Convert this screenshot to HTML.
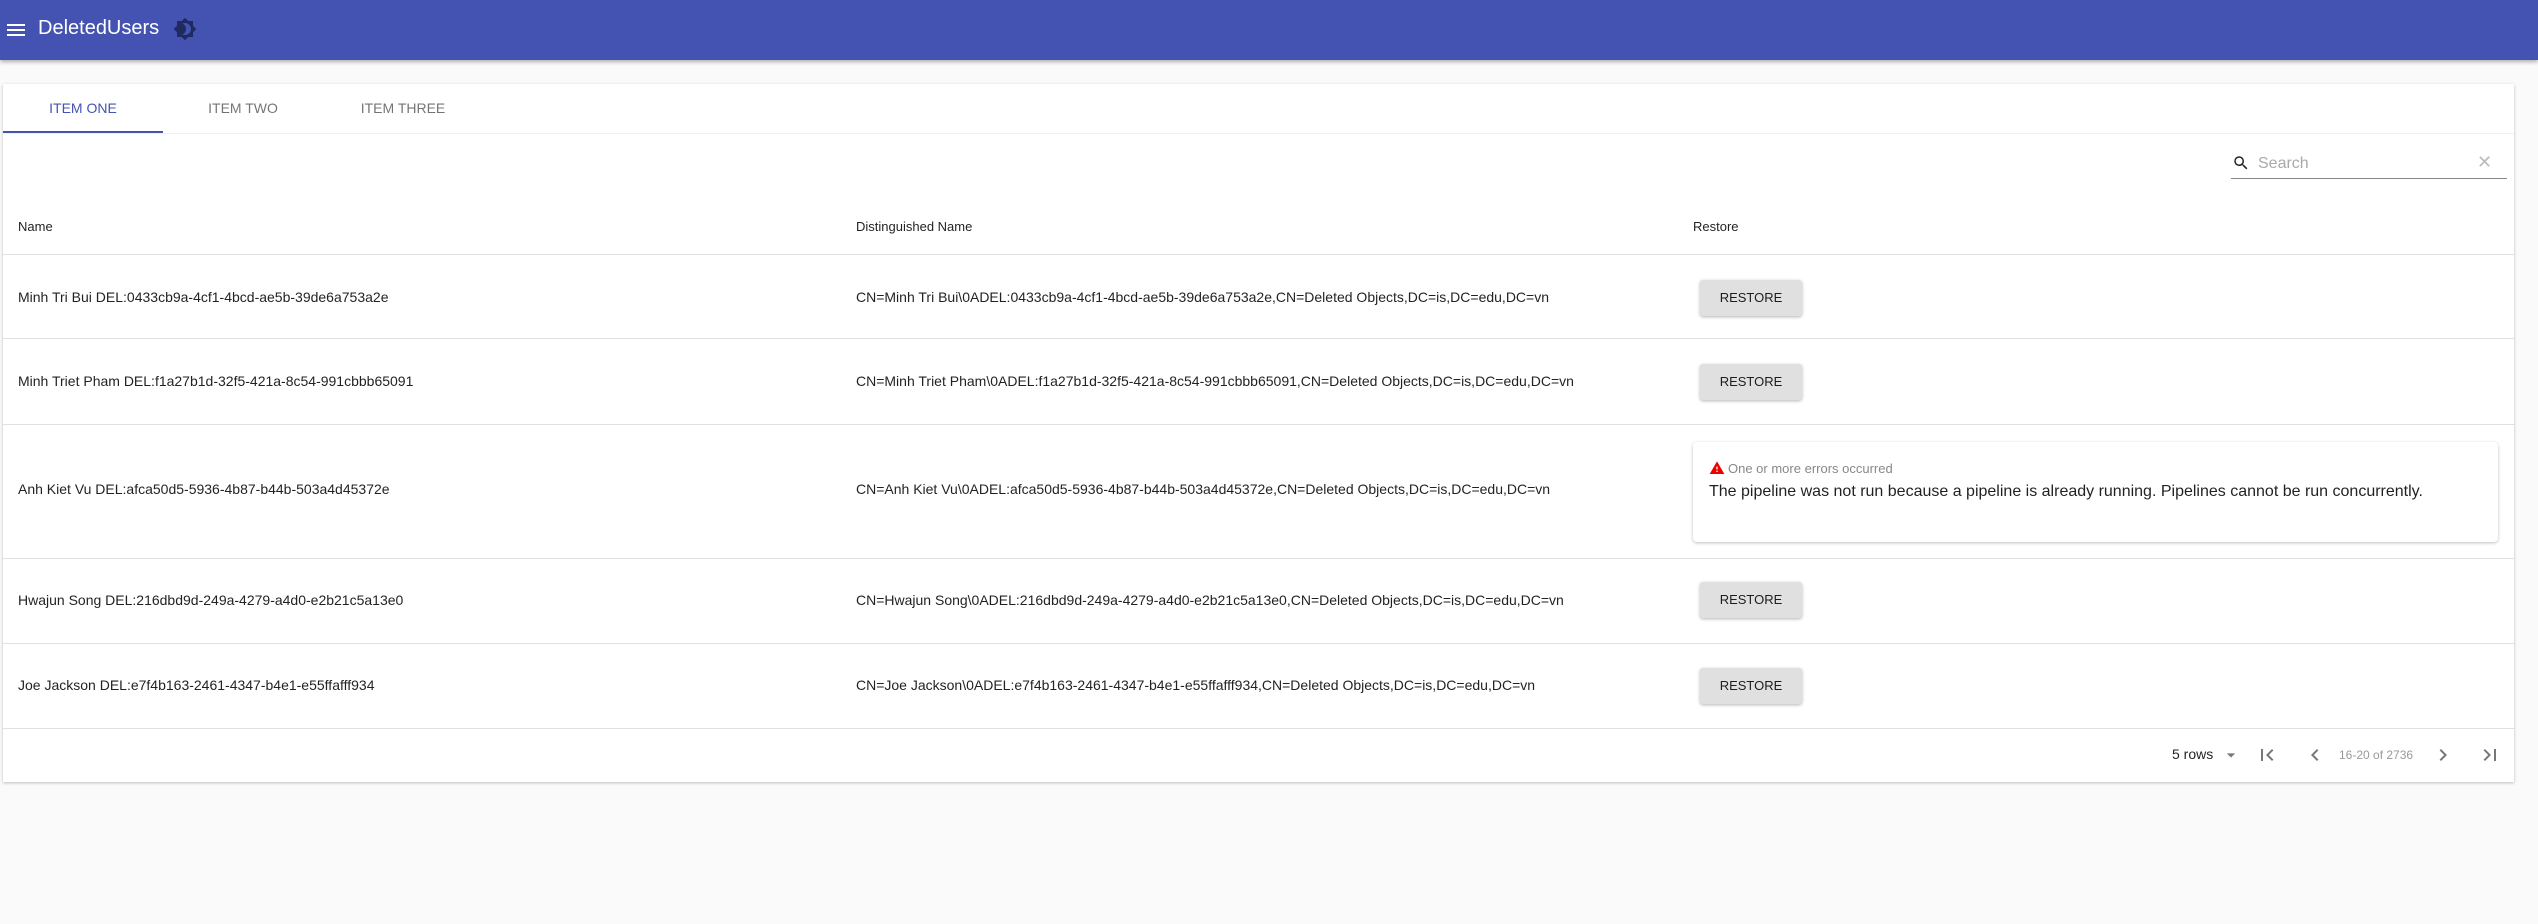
<!DOCTYPE html>
<html><head><meta charset="utf-8"><style>
*{box-sizing:border-box;margin:0;padding:0}
body{width:2538px;height:924px;background:#fafafa;font-family:"Liberation Sans",Arial,sans-serif;position:relative;overflow:hidden;color:rgba(0,0,0,.87)}
.hdr{position:absolute;left:0;top:0;width:2538px;height:60px;background:#4453b2;box-shadow:0 2px 4px rgba(0,0,0,.3)}
.abs{position:absolute}
.card{position:absolute;left:3px;top:84px;width:2511px;height:698px;background:#fff;box-shadow:0 1px 3px rgba(0,0,0,.25)}
.tab{position:absolute;top:0;height:49px;width:160px;text-align:center;line-height:49px;font-size:14px;color:rgba(0,0,0,.55)}
.cell{position:absolute;font-size:14px;white-space:nowrap}
.line{position:absolute;left:0;width:2511px;height:1px;background:#e0e0e0}
.btn{position:absolute;left:1697px;width:102px;height:36px;background:#e0e0e0;border-radius:3px;box-shadow:0 1px 3px rgba(0,0,0,.3);font-size:13px;text-align:center;line-height:36px;color:rgba(0,0,0,.87)}
</style></head><body>
<div class="hdr">
 <svg class="abs" style="left:4px;top:18px" width="24" height="24" viewBox="0 0 24 24"><path d="M3 18h18v-2H3v2zm0-5h18v-2H3v2zm0-7v2h18V6H3z" fill="#fff"/></svg>
 <div class="abs" style="left:38px;top:17px;font-size:20px;color:#fff">DeletedUsers</div>
 <svg class="abs" style="left:173px;top:17px" width="24" height="24" viewBox="0 0 24 24"><path d="M20 8.69V4h-4.69L12 .69 8.69 4H4v4.69L.69 12 4 15.31V20h4.69L12 23.31 15.31 20H20v-4.69L23.31 12 20 8.69zM12 18c-.89 0-1.74-.2-2.5-.55C11.56 16.5 13 14.42 13 12s-1.44-4.5-3.5-5.45C10.26 6.2 11.11 6 12 6c3.31 0 6 2.69 6 6s-2.69 6-6 6z" fill="#1f2a5e"/></svg>
</div>
<div class="card">
 <div class="tab" style="left:0;color:#4453b2">ITEM ONE</div>
 <div class="tab" style="left:160px">ITEM TWO</div>
 <div class="tab" style="left:320px">ITEM THREE</div>
 <div class="abs" style="left:0;top:47px;width:160px;height:2px;background:#4453b2"></div>
 <div class="line" style="top:49px;background:#f0f0f0"></div>
 <svg class="abs" style="left:2229px;top:70px" width="18" height="18" viewBox="0 0 24 24"><path d="M15.5 14h-.79l-.28-.27A6.47 6.47 0 0 0 16 9.5 6.5 6.5 0 1 0 9.5 16c1.61 0 3.09-.59 4.23-1.57l.27.28v.79l5 4.99L20.49 19l-4.99-5zm-6 0C7.01 14 5 11.99 5 9.5S7.01 5 9.5 5 14 7.01 14 9.5 11.99 14 9.5 14z" fill="#222"/></svg>
 <div class="abs" style="left:2255px;top:71px;font-size:16px;color:#aaa">Search</div>
 <div class="abs" style="left:2474px;top:68px;font-size:18px;color:#bbb">✕</div>
 <div class="abs" style="left:2228px;top:94px;width:276px;height:1px;background:#888"></div>
 <div class="cell" style="left:15px;top:135px;font-size:13px">Name</div>
 <div class="cell" style="left:853px;top:135px;font-size:13px">Distinguished Name</div>
 <div class="cell" style="left:1690px;top:135px;font-size:13px">Restore</div>
 <div class="line" style="top:170px"></div>

 <div class="cell" style="left:15px;top:205px">Minh Tri Bui DEL:0433cb9a-4cf1-4bcd-ae5b-39de6a753a2e</div>
 <div class="cell" style="left:853px;top:205px">CN=Minh Tri Bui\0ADEL:0433cb9a-4cf1-4bcd-ae5b-39de6a753a2e,CN=Deleted Objects,DC=is,DC=edu,DC=vn</div>
 <div class="btn" style="top:196px">RESTORE</div>
 <div class="line" style="top:254px"></div>

 <div class="cell" style="left:15px;top:289px">Minh Triet Pham DEL:f1a27b1d-32f5-421a-8c54-991cbbb65091</div>
 <div class="cell" style="left:853px;top:289px">CN=Minh Triet Pham\0ADEL:f1a27b1d-32f5-421a-8c54-991cbbb65091,CN=Deleted Objects,DC=is,DC=edu,DC=vn</div>
 <div class="btn" style="top:280px">RESTORE</div>
 <div class="line" style="top:340px"></div>

 <div class="cell" style="left:15px;top:397px">Anh Kiet Vu DEL:afca50d5-5936-4b87-b44b-503a4d45372e</div>
 <div class="cell" style="left:853px;top:397px">CN=Anh Kiet Vu\0ADEL:afca50d5-5936-4b87-b44b-503a4d45372e,CN=Deleted Objects,DC=is,DC=edu,DC=vn</div>
 <div class="abs" style="left:1690px;top:358px;width:805px;height:100px;background:#fff;border-radius:4px;box-shadow:0 1px 3px rgba(0,0,0,.25)">
  <svg class="abs" style="left:16px;top:18px" width="16" height="16" viewBox="0 0 24 24"><path d="M1 21h22L12 2 1 21zm12-3h-2v-2h2v2zm0-4h-2v-4h2v4z" fill="#e00"/></svg>
  <div class="abs" style="left:35px;top:19px;font-size:13px;color:#888">One or more errors occurred</div>
  <div class="abs" style="left:16px;top:41px;font-size:16px;white-space:nowrap">The pipeline was not run because a pipeline is already running. Pipelines cannot be run concurrently.</div>
 </div>
 <div class="line" style="top:474px"></div>

 <div class="cell" style="left:15px;top:508px">Hwajun Song DEL:216dbd9d-249a-4279-a4d0-e2b21c5a13e0</div>
 <div class="cell" style="left:853px;top:508px">CN=Hwajun Song\0ADEL:216dbd9d-249a-4279-a4d0-e2b21c5a13e0,CN=Deleted Objects,DC=is,DC=edu,DC=vn</div>
 <div class="btn" style="top:498px">RESTORE</div>
 <div class="line" style="top:559px"></div>

 <div class="cell" style="left:15px;top:593px">Joe Jackson DEL:e7f4b163-2461-4347-b4e1-e55ffafff934</div>
 <div class="cell" style="left:853px;top:593px">CN=Joe Jackson\0ADEL:e7f4b163-2461-4347-b4e1-e55ffafff934,CN=Deleted Objects,DC=is,DC=edu,DC=vn</div>
 <div class="btn" style="top:584px">RESTORE</div>
 <div class="line" style="top:644px"></div>

 <div class="abs" style="left:2169px;top:662px;font-size:14px">5 rows</div>
 <svg class="abs" style="left:2218px;top:661px" width="20" height="20" viewBox="0 0 24 24"><path d="M7 10l5 5 5-5z" fill="#777"/></svg>
 <svg class="abs" style="left:2252px;top:659px" width="24" height="24" viewBox="0 0 24 24"><path d="M18.41 16.59L13.82 12l4.59-4.59L17 6l-6 6 6 6zM6 6h2v12H6z" fill="#777"/></svg>
 <svg class="abs" style="left:2300px;top:659px" width="24" height="24" viewBox="0 0 24 24"><path d="M15.41 16.59L10.83 12l4.58-4.59L14 6l-6 6 6 6z" fill="#777"/></svg>
 <div class="abs" style="left:2336px;top:664px;font-size:12px;color:#999">16-20 of 2736</div>
 <svg class="abs" style="left:2428px;top:659px" width="24" height="24" viewBox="0 0 24 24"><path d="M8.59 16.59L13.17 12 8.59 7.41 10 6l6 6-6 6z" fill="#777"/></svg>
 <svg class="abs" style="left:2475px;top:659px" width="24" height="24" viewBox="0 0 24 24"><path d="M5.59 7.41L10.18 12l-4.59 4.59L7 18l6-6-6-6zM16 6h2v12h-2z" fill="#777"/></svg>
</div>
</body></html>
